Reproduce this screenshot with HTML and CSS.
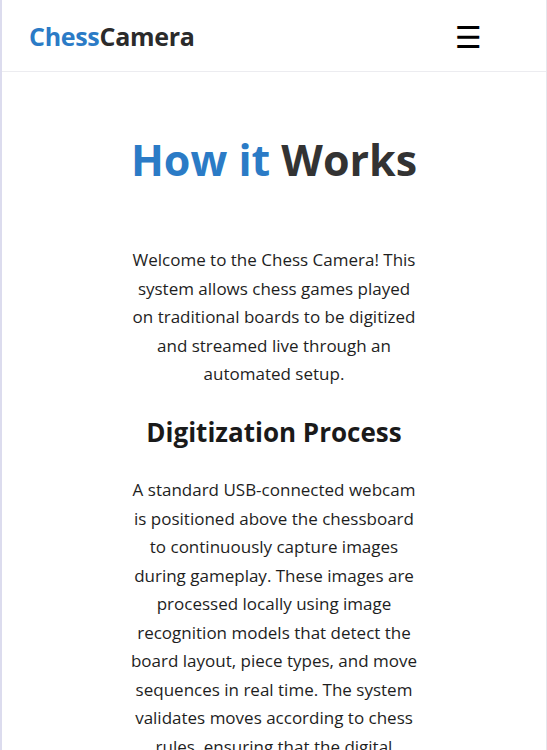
FILE: index.html
```html
<!DOCTYPE html>
<html lang="en">
<head>
<meta charset="utf-8">
<title>ChessCamera - How it Works</title>
<link rel="stylesheet" href="styles.css">
</head>
<body>
<div class="frame">
  <header class="topbar">
    <div class="logo"><span class="accent">Chess</span>Camera</div>
    <button class="menu" aria-label="Menu">&#9776;</button>
  </header>
  <main class="content">
    <h1 class="title"><span class="accent">How it</span> Works</h1>
    <p class="text">Welcome to the Chess Camera! This system allows chess games played on traditional boards to be digitized and streamed live through an automated setup.</p>
    <h2 class="subtitle">Digitization Process</h2>
    <p class="text">A standard USB-connected webcam is positioned above the chessboard to continuously capture images during gameplay. These images are processed locally using image recognition models that detect the board layout, piece types, and move sequences in real time. The system validates moves according to chess rules, ensuring that the digital representation stays accurate throughout the game.</p>
  </main>
</div>
</body>
</html>
```
FILE: styles.css
```css
html, body {
  margin: 0;
  padding: 0;
  background: #fff;
}
body {
  font-family: "Open Sans", "Noto Sans", sans-serif;
  color: #222;
  overflow: hidden;
}
.frame {
  border-left: 2px solid #dcdcee;
  border-right: 1px solid #e6e6ec;
  min-height: 750px;
  box-sizing: border-box;
}
.topbar {
  height: 72px;
  border-bottom: 1px solid #ececf0;
  display: flex;
  align-items: center;
  justify-content: space-between;
  padding: 0 64px 0 27px;
  box-sizing: border-box;
}
.logo {
  font-size: 25px;
  font-weight: 700;
  color: #2b2b2b;
  letter-spacing: -0.3px;
}
.accent {
  color: #2b7bc6;
}
.menu {
  background: none;
  border: 0;
  padding: 0;
  margin-top: 5px;
  font-size: 30px;
  line-height: 1;
  color: #000;
  font-family: "DejaVu Sans", sans-serif;
}
.content {
  width: 290px;
  margin: 0 auto;
  text-align: center;
  padding-top: 62px;
}
.title {
  margin: 0 -40px 60px;
  font-size: 43px;
  font-weight: 700;
  color: #333;
  line-height: 52px;
  white-space: nowrap;
}
.subtitle {
  margin: 27px 0 27px;
  font-size: 26px;
  font-weight: 700;
  color: #1a1a1a;
  line-height: 1.3;
}
.text {
  margin: 0;
  font-size: 17px;
  line-height: 28.5px;
  color: #1e1e1e;
}
```
